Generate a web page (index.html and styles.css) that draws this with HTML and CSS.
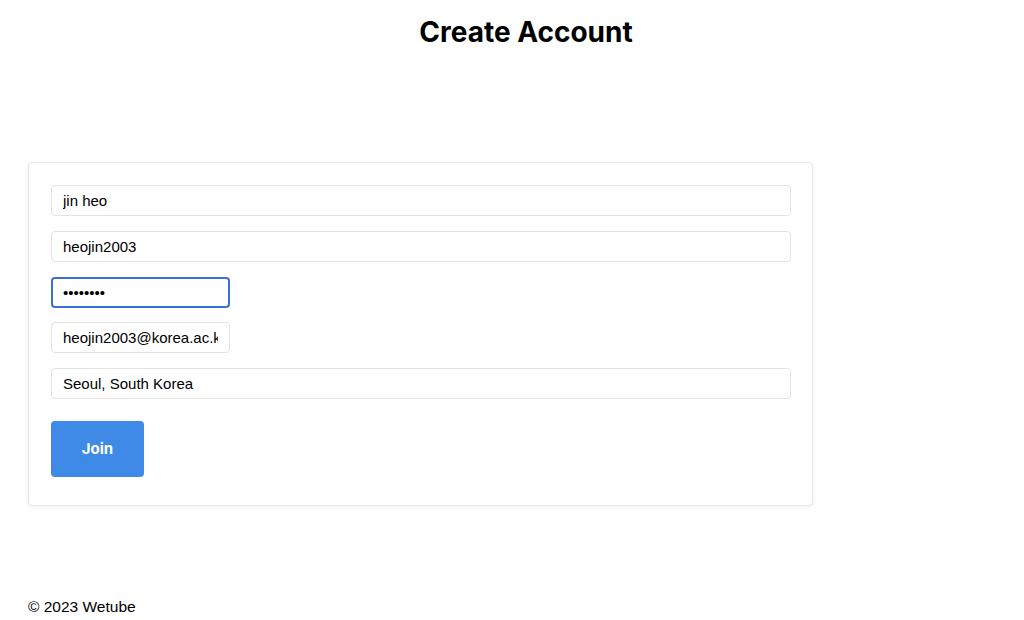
FILE: index.html
```html
<!DOCTYPE html>
<html lang="en">
<head>
  <meta charset="UTF-8" />
  <meta name="viewport" content="width=device-width, initial-scale=1.0"/>
  <title>Create Account | Wetube</title>
  <link rel="stylesheet" href="styles.css">
</head>
<body>
  <header class="page-header">
    <h1>Create Account</h1>
  </header>
  <main class="content">
    <form class="join-form" method="POST">
      <input type="text" name="name" placeholder="Name" value="jin heo" required />
      <input type="text" name="username" placeholder="Username" value="heojin2003" required />
      <input type="password" name="password" placeholder="Password" value="password" class="focused" required />
      <input type="email" name="email" placeholder="Email" value="heojin2003@korea.ac.kr" required />
      <input type="text" name="location" placeholder="Location" value="Seoul, South Korea" required />
      <button type="submit" class="join-btn">Join</button>
    </form>
  </main>
  <footer class="page-footer">&copy; 2023 Wetube</footer>
</body>
</html>
```
FILE: styles.css
```css
body {
  margin: 0;
  font-family: "Liberation Sans", Arial, sans-serif;
  color: #000;
  background: white;
  height: 620px;
  display: flex;
  flex-direction: column;
}
.page-header {
  display: flex;
  justify-content: center;
  padding-left: 28px;
}
.page-header h1 {
  font-family: Inter, "Liberation Sans", sans-serif;
  font-size: 28px;
  font-weight: 700;
  margin: 14px 0 0;
  line-height: 36px;
}
.content {
  padding: 112px 28px 0;
}
.join-form {
  width: 740px;
  display: flex;
  flex-direction: column;
  align-items: flex-start;
  gap: 14.75px;
  padding: 22px 21px 28px 22px;
  border: 1px solid #e6e6e6;
  border-radius: 4px;
  box-shadow: 0 2px 6px rgba(0,0,0,0.05);
}
.join-form input {
  box-sizing: border-box;
  height: 31px;
  padding: 0 11px;
  font-family: "Liberation Sans", Arial, sans-serif;
  font-size: 15px;
  color: #000;
  border: 1px solid #e3e3e3;
  border-radius: 4px;
  outline: none;
}
.join-form input[type="text"] {
  width: 100%;
}
.join-form input[type="password"],
.join-form input[type="email"] {
  width: 179px;
}
.join-form input.focused {
  border: 2px solid #3a6fd6;
  padding: 0 10px;
}
.join-btn {
  margin-top: 7px;
  width: 93px;
  height: 56px;
  background: #3e8ae6;
  color: white;
  border: none;
  border-radius: 4px;
  font-family: Inter, "Liberation Sans", sans-serif;
  font-size: 15px;
  font-weight: 700;
}
.page-footer {
  margin-top: auto;
  padding: 0 28px 3px;
  font-size: 15.5px;
  line-height: 20px;
}
```
